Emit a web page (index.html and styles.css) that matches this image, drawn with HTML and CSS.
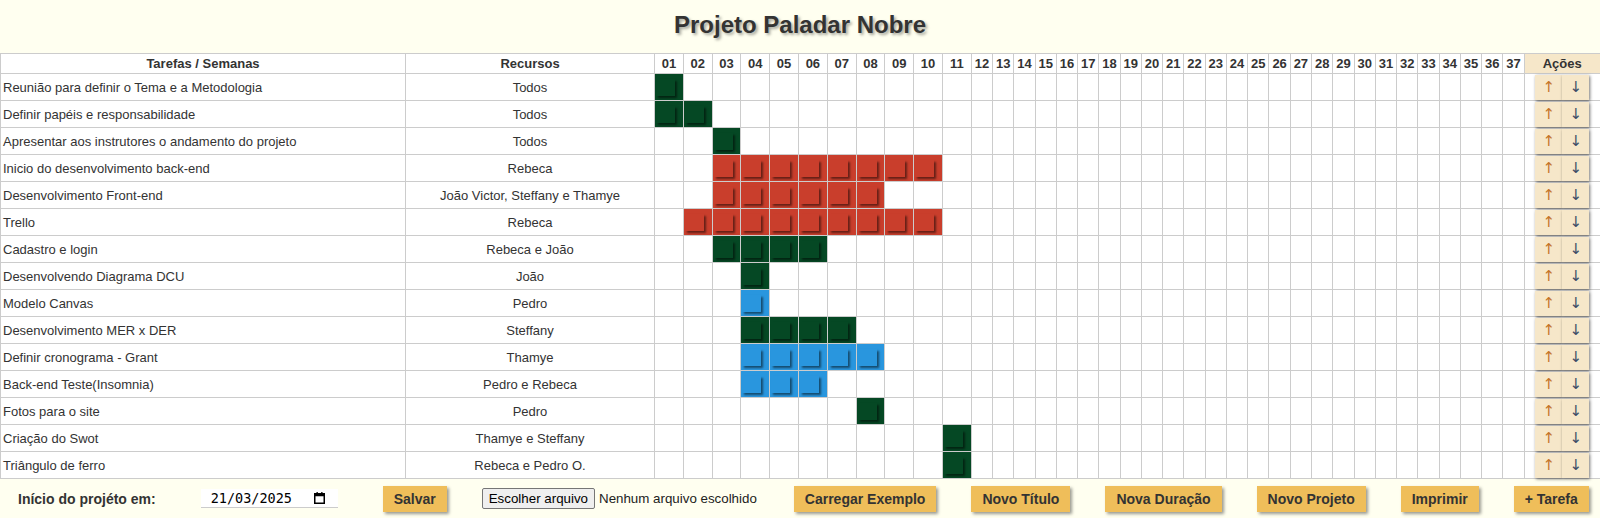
FILE: index.html
```html
<!DOCTYPE html>
<html lang="pt-BR">
<head>
<meta charset="utf-8">
<title>Projeto Paladar Nobre</title>
<link rel="stylesheet" href="styles.css">
</head>
<body>
<h1 class="title">Projeto Paladar Nobre</h1>
<table class="gantt">
<colgroup>
<col class="c-task"><col class="c-res">
<col class="c-wk"><col class="c-wk"><col class="c-wk"><col class="c-wk"><col class="c-wk"><col class="c-wk"><col class="c-wk"><col class="c-wk"><col class="c-wk"><col class="c-wk"><col class="c-wk">
<col class="c-wn"><col class="c-wn"><col class="c-wn"><col class="c-wn"><col class="c-wn"><col class="c-wn"><col class="c-wn"><col class="c-wn"><col class="c-wn"><col class="c-wn"><col class="c-wn"><col class="c-wn"><col class="c-wn"><col class="c-wn"><col class="c-wn"><col class="c-wn"><col class="c-wn"><col class="c-wn"><col class="c-wn"><col class="c-wn"><col class="c-wn"><col class="c-wn"><col class="c-wn"><col class="c-wn"><col class="c-wn"><col class="c-wn">
<col class="c-act">
</colgroup>
<thead>
<tr>
<th>Tarefas / Semanas</th><th>Recursos</th>
<th>01</th><th>02</th><th>03</th><th>04</th><th>05</th><th>06</th><th>07</th><th>08</th><th>09</th><th>10</th>
<th>11</th><th>12</th><th>13</th><th>14</th><th>15</th><th>16</th><th>17</th><th>18</th><th>19</th><th>20</th>
<th>21</th><th>22</th><th>23</th><th>24</th><th>25</th><th>26</th><th>27</th><th>28</th><th>29</th><th>30</th>
<th>31</th><th>32</th><th>33</th><th>34</th><th>35</th><th>36</th><th>37</th>
<th class="act-h">Ações</th>
</tr>
</thead>
<tbody>
<tr><td class="task">Reunião para definir o Tema e a Metodologia</td><td class="res">Todos</td>
<td class="g"><span class="blk"></span></td>
<td></td><td></td><td></td><td></td><td></td><td></td><td></td><td></td><td></td><td></td>
<td></td><td></td><td></td><td></td><td></td><td></td><td></td><td></td><td></td><td></td>
<td></td><td></td><td></td><td></td><td></td><td></td><td></td><td></td><td></td><td></td>
<td></td><td></td><td></td><td></td><td></td><td></td>
<td class="act"><button class="up">↑</button><button class="dn">↓</button></td></tr>

<tr><td class="task">Definir papéis e responsabilidade</td><td class="res">Todos</td>
<td class="g"><span class="blk"></span></td><td class="g"><span class="blk"></span></td>
<td></td><td></td><td></td><td></td><td></td><td></td><td></td><td></td><td></td><td></td>
<td></td><td></td><td></td><td></td><td></td><td></td><td></td><td></td><td></td><td></td>
<td></td><td></td><td></td><td></td><td></td><td></td><td></td><td></td><td></td><td></td>
<td></td><td></td><td></td><td></td><td></td>
<td class="act"><button class="up">↑</button><button class="dn">↓</button></td></tr>

<tr><td class="task">Apresentar aos instrutores o andamento do projeto</td><td class="res">Todos</td>
<td></td><td></td>
<td class="g"><span class="blk"></span></td>
<td></td><td></td><td></td><td></td><td></td><td></td><td></td><td></td><td></td><td></td>
<td></td><td></td><td></td><td></td><td></td><td></td><td></td><td></td><td></td><td></td>
<td></td><td></td><td></td><td></td><td></td><td></td><td></td><td></td><td></td><td></td>
<td></td><td></td><td></td><td></td>
<td class="act"><button class="up">↑</button><button class="dn">↓</button></td></tr>

<tr><td class="task">Inicio do desenvolvimento back-end</td><td class="res">Rebeca</td>
<td></td><td></td>
<td class="r"><span class="blk"></span></td><td class="r"><span class="blk"></span></td><td class="r"><span class="blk"></span></td><td class="r"><span class="blk"></span></td><td class="r"><span class="blk"></span></td><td class="r"><span class="blk"></span></td><td class="r"><span class="blk"></span></td><td class="r"><span class="blk"></span></td>
<td></td><td></td><td></td><td></td><td></td><td></td><td></td><td></td><td></td><td></td>
<td></td><td></td><td></td><td></td><td></td><td></td><td></td><td></td><td></td><td></td>
<td></td><td></td><td></td><td></td><td></td><td></td><td></td>
<td class="act"><button class="up">↑</button><button class="dn">↓</button></td></tr>

<tr><td class="task">Desenvolvimento Front-end</td><td class="res">João Victor, Steffany e Thamye</td>
<td></td><td></td>
<td class="r"><span class="blk"></span></td><td class="r"><span class="blk"></span></td><td class="r"><span class="blk"></span></td><td class="r"><span class="blk"></span></td><td class="r"><span class="blk"></span></td><td class="r"><span class="blk"></span></td>
<td></td><td></td><td></td><td></td><td></td><td></td><td></td><td></td><td></td><td></td>
<td></td><td></td><td></td><td></td><td></td><td></td><td></td><td></td><td></td><td></td>
<td></td><td></td><td></td><td></td><td></td><td></td><td></td><td></td><td></td>
<td class="act"><button class="up">↑</button><button class="dn">↓</button></td></tr>

<tr><td class="task">Trello</td><td class="res">Rebeca</td>
<td></td>
<td class="r"><span class="blk"></span></td><td class="r"><span class="blk"></span></td><td class="r"><span class="blk"></span></td><td class="r"><span class="blk"></span></td><td class="r"><span class="blk"></span></td><td class="r"><span class="blk"></span></td><td class="r"><span class="blk"></span></td><td class="r"><span class="blk"></span></td><td class="r"><span class="blk"></span></td>
<td></td><td></td><td></td><td></td><td></td><td></td><td></td><td></td><td></td><td></td>
<td></td><td></td><td></td><td></td><td></td><td></td><td></td><td></td><td></td><td></td>
<td></td><td></td><td></td><td></td><td></td><td></td><td></td>
<td class="act"><button class="up">↑</button><button class="dn">↓</button></td></tr>

<tr><td class="task">Cadastro e login</td><td class="res">Rebeca e João</td>
<td></td><td></td>
<td class="g"><span class="blk"></span></td><td class="g"><span class="blk"></span></td><td class="g"><span class="blk"></span></td><td class="g"><span class="blk"></span></td>
<td></td><td></td><td></td><td></td><td></td><td></td><td></td><td></td><td></td><td></td>
<td></td><td></td><td></td><td></td><td></td><td></td><td></td><td></td><td></td><td></td>
<td></td><td></td><td></td><td></td><td></td><td></td><td></td><td></td><td></td><td></td>
<td></td>
<td class="act"><button class="up">↑</button><button class="dn">↓</button></td></tr>

<tr><td class="task">Desenvolvendo Diagrama DCU</td><td class="res">João</td>
<td></td><td></td><td></td>
<td class="g"><span class="blk"></span></td>
<td></td><td></td><td></td><td></td><td></td><td></td><td></td><td></td><td></td><td></td>
<td></td><td></td><td></td><td></td><td></td><td></td><td></td><td></td><td></td><td></td>
<td></td><td></td><td></td><td></td><td></td><td></td><td></td><td></td><td></td><td></td>
<td></td><td></td><td></td>
<td class="act"><button class="up">↑</button><button class="dn">↓</button></td></tr>

<tr><td class="task">Modelo Canvas</td><td class="res">Pedro</td>
<td></td><td></td><td></td>
<td class="b"><span class="blk"></span></td>
<td></td><td></td><td></td><td></td><td></td><td></td><td></td><td></td><td></td><td></td>
<td></td><td></td><td></td><td></td><td></td><td></td><td></td><td></td><td></td><td></td>
<td></td><td></td><td></td><td></td><td></td><td></td><td></td><td></td><td></td><td></td>
<td></td><td></td><td></td>
<td class="act"><button class="up">↑</button><button class="dn">↓</button></td></tr>

<tr><td class="task">Desenvolvimento MER x DER</td><td class="res">Steffany</td>
<td></td><td></td><td></td>
<td class="g"><span class="blk"></span></td><td class="g"><span class="blk"></span></td><td class="g"><span class="blk"></span></td><td class="g"><span class="blk"></span></td>
<td></td><td></td><td></td><td></td><td></td><td></td><td></td><td></td><td></td><td></td>
<td></td><td></td><td></td><td></td><td></td><td></td><td></td><td></td><td></td><td></td>
<td></td><td></td><td></td><td></td><td></td><td></td><td></td><td></td><td></td><td></td>
<td class="act"><button class="up">↑</button><button class="dn">↓</button></td></tr>

<tr><td class="task">Definir cronograma - Grant</td><td class="res">Thamye</td>
<td></td><td></td><td></td>
<td class="b"><span class="blk"></span></td><td class="b"><span class="blk"></span></td><td class="b"><span class="blk"></span></td><td class="b"><span class="blk"></span></td><td class="b"><span class="blk"></span></td>
<td></td><td></td><td></td><td></td><td></td><td></td><td></td><td></td><td></td><td></td>
<td></td><td></td><td></td><td></td><td></td><td></td><td></td><td></td><td></td><td></td>
<td></td><td></td><td></td><td></td><td></td><td></td><td></td><td></td><td></td>
<td class="act"><button class="up">↑</button><button class="dn">↓</button></td></tr>

<tr><td class="task">Back-end Teste(Insomnia)</td><td class="res">Pedro e Rebeca</td>
<td></td><td></td><td></td>
<td class="b"><span class="blk"></span></td><td class="b"><span class="blk"></span></td><td class="b"><span class="blk"></span></td>
<td></td><td></td><td></td><td></td><td></td><td></td><td></td><td></td><td></td><td></td>
<td></td><td></td><td></td><td></td><td></td><td></td><td></td><td></td><td></td><td></td>
<td></td><td></td><td></td><td></td><td></td><td></td><td></td><td></td><td></td><td></td>
<td></td>
<td class="act"><button class="up">↑</button><button class="dn">↓</button></td></tr>

<tr><td class="task">Fotos para o site</td><td class="res">Pedro</td>
<td></td><td></td><td></td><td></td><td></td><td></td><td></td>
<td class="g"><span class="blk"></span></td>
<td></td><td></td><td></td><td></td><td></td><td></td><td></td><td></td><td></td><td></td>
<td></td><td></td><td></td><td></td><td></td><td></td><td></td><td></td><td></td><td></td>
<td></td><td></td><td></td><td></td><td></td><td></td><td></td><td></td><td></td>
<td class="act"><button class="up">↑</button><button class="dn">↓</button></td></tr>

<tr><td class="task">Criação do Swot</td><td class="res">Thamye e Steffany</td>
<td></td><td></td><td></td><td></td><td></td><td></td><td></td><td></td><td></td><td></td>
<td class="g"><span class="blk"></span></td>
<td></td><td></td><td></td><td></td><td></td><td></td><td></td><td></td><td></td><td></td>
<td></td><td></td><td></td><td></td><td></td><td></td><td></td><td></td><td></td><td></td>
<td></td><td></td><td></td><td></td><td></td><td></td>
<td class="act"><button class="up">↑</button><button class="dn">↓</button></td></tr>

<tr><td class="task">Triângulo de ferro</td><td class="res">Rebeca e Pedro O.</td>
<td></td><td></td><td></td><td></td><td></td><td></td><td></td><td></td><td></td><td></td>
<td class="g"><span class="blk"></span></td>
<td></td><td></td><td></td><td></td><td></td><td></td><td></td><td></td><td></td><td></td>
<td></td><td></td><td></td><td></td><td></td><td></td><td></td><td></td><td></td><td></td>
<td></td><td></td><td></td><td></td><td></td><td></td>
<td class="act"><button class="up">↑</button><button class="dn">↓</button></td></tr>
</tbody>
</table>

<div class="controls">
  <span class="start-label">Início do projéto em:</span>
  <div class="date">
    <span class="date-val">21/03/2025</span>
    <svg class="cal" width="11" height="12" viewBox="0 0 11 12" aria-hidden="true">
      <rect x="0.75" y="1.75" width="9.5" height="9.5" fill="none" stroke="#000" stroke-width="1.5"/>
      <rect x="0.75" y="1.75" width="9.5" height="2.5" fill="#000"/>
      <rect x="2.5" y="0" width="1.3" height="2" fill="#000"/>
      <rect x="7.2" y="0" width="1.3" height="2" fill="#000"/>
    </svg>
  </div>
  <button class="btn">Salvar</button>
  <label class="file">
    <span class="file-btn">Escolher arquivo</span>
    <span class="file-name">Nenhum arquivo escolhido</span>
  </label>
  <button class="btn">Carregar Exemplo</button>
  <button class="btn">Novo Título</button>
  <button class="btn">Nova Duração</button>
  <button class="btn">Novo Projeto</button>
  <button class="btn">Imprimir</button>
  <button class="btn last">+ Tarefa</button>
</div>
</body>
</html>
```

FILE: styles.css
```css
html, body {
  margin: 0;
  padding: 0;
  background: #fffff0;
  font-family: "Liberation Sans", Arial, sans-serif;
  color: #333;
}

.title {
  margin: 0;
  padding: 11px 0 14px;
  font-size: 24px;
  line-height: 28px;
  font-weight: bold;
  text-align: center;
  color: #333;
  text-shadow: 2px 2px 3px rgba(0, 0, 0, 0.35);
}

.gantt {
  width: 1600px;
  table-layout: fixed;
  border-collapse: collapse;
  background: #fff;
  font-size: 13px;
}

.c-task { width: 405px; }
.c-res { width: 249px; }
.c-wk { width: 28.8px; }
.c-wn { width: 21.27px; }
.c-act { width: 76px; }

.gantt th,
.gantt td {
  border: 1px solid #ccc;
  padding: 0;
  color: #333;
}

.gantt th {
  height: 19px;
  font-weight: bold;
  font-size: 13px;
  text-align: center;
  white-space: nowrap;
  overflow: hidden;
}

.gantt th.act-h {
  background: #f6e7c9;
}

.gantt td {
  height: 26px;
  vertical-align: middle;
}

.gantt td.task {
  text-align: left;
  padding-left: 2px;
  white-space: nowrap;
}

.gantt td.res {
  text-align: center;
  white-space: nowrap;
}

.gantt td.g { background: #054824; }
.gantt td.r { background: #c93e2c; }
.gantt td.b { background: #2996de; }

.blk {
  display: block;
  width: 19px;
  height: 17px;
  margin-left: 1px;
  box-shadow: 2px 2px 2px rgba(0, 0, 0, 0.5);
}

.gantt td.g .blk { background: #054824; }
.gantt td.r .blk { background: #c93e2c; }
.gantt td.b .blk { background: #2996de; }

.gantt td.act {
  text-align: center;
  white-space: nowrap;
  font-size: 0;
}

.act button {
  width: 27px;
  height: 25px;
  margin: 0;
  padding: 0;
  border: none;
  background: #f6e7c9;
  box-shadow: 1px 1px 3px rgba(0, 0, 0, 0.55);
  font-family: "DejaVu Sans", "Liberation Sans", sans-serif;
  font-size: 15px;
  line-height: 25px;
  vertical-align: middle;
}

.act button.up { color: #c47428; }
.act button.dn { color: #3d4c66; }

.controls {
  display: flex;
  align-items: center;
  height: 39px;
  padding-left: 18px;
  white-space: nowrap;
}

.controls > * {
  flex-shrink: 0;
}

.start-label {
  font-weight: bold;
  font-size: 14px;
  color: #333;
  margin-right: 45px;
}

.date {
  box-sizing: border-box;
  display: flex;
  align-items: center;
  justify-content: space-between;
  width: 137px;
  height: 19px;
  padding: 0 13px 0 10px;
  border-bottom: 1px solid #ccc;
  background: #fff;
  margin-right: 45px;
}

.date-val {
  font-family: "DejaVu Sans Mono", "Liberation Mono", monospace;
  font-size: 13.5px;
  color: #000;
}

.cal {
  display: block;
}

.btn {
  height: 26px;
  padding: 0 11px;
  border: none;
  background: #efbe5a;
  color: #333;
  font-family: "Liberation Sans", Arial, sans-serif;
  font-weight: bold;
  font-size: 14px;
  box-shadow: 2px 2px 3px rgba(0, 0, 0, 0.4);
  margin-right: 35px;
}

.btn.last {
  margin-right: 0;
}

.file {
  display: flex;
  align-items: center;
  margin-right: 37px;
  font-size: 13.33px;
  color: #222;
}

.file-btn {
  box-sizing: border-box;
  height: 21px;
  line-height: 19px;
  padding: 0 6px;
  border: 1px solid #767676;
  border-radius: 2px;
  background: #efefef;
  color: #000;
  margin-right: 4px;
}

.file-name {
  color: #222;
}
```
